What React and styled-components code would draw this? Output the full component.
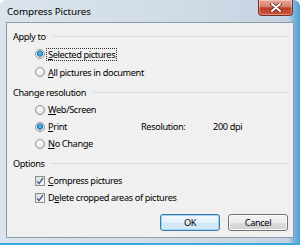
import React from "react";
import styled, { createGlobalStyle } from "styled-components";

const GlobalStyle = createGlobalStyle`
  * { box-sizing: border-box; }
  body {
    margin: 0;
    background: #ffffff;
    font-family: "Noto Sans", "Open Sans", sans-serif;
  }
`;

const Window = styled.div`
  width: 300px;
  height: 245px;
  display: flex;
  flex-direction: column;
  border-radius: 6px 6px 0 0;
  background: linear-gradient(
    to right,
    #dbe4ec 0%,
    #cfdbe6 60%,
    #c4d3e1 96%,
    #7fb2d8 98%,
    #4aa3d6 100%
  );
  border-bottom: 2px solid #3aa9dc;
  overflow: hidden;
`;

const TitleBar = styled.div`
  height: 22px;
  display: flex;
  justify-content: space-between;
  align-items: flex-start;
  padding-left: 7px;
`;

const Title = styled.span`
  padding-top: 6px;
  font-size: 9.8px;
  line-height: 12px;
  letter-spacing: -0.1px;
  color: #000;
`;

const CloseButton = styled.div`
  width: 35px;
  height: 16px;
  margin-right: 7px;
  display: flex;
  align-items: center;
  justify-content: center;
  border: 1px solid #7a3226;
  border-top: none;
  border-radius: 0 0 4px 4px;
  background: linear-gradient(#e7a597 0%, #d5806f 45%, #bf3d26 52%, #c8563c 100%);
  box-shadow: inset 0 0 0 1px rgba(255, 255, 255, 0.35);
`;

const Client = styled.div`
  flex: 1;
  margin: 0 6px 5px 6px;
  display: flex;
  flex-direction: column;
  padding: 4px 5px 0 6px;
  background: #f0f0f0;
  border: 1px solid #8d9cab;
  color: #000;
  font-size: 9.2px;
  letter-spacing: -0.36px;
`;

const Heading = styled.div`
  height: 18px;
  display: flex;
  align-items: center;
  gap: 6px;
  margin-top: ${(p) => p.$gap || 0}px;

  &::after {
    content: "";
    flex: 1;
    height: 1px;
    background: #d5dfe5;
  }
`;

const Option = styled.div`
  height: ${(p) => p.$h || 17}px;
  display: flex;
  align-items: center;
  padding-left: 22px;
`;

const Radio = styled.span`
  width: 10px;
  height: 10px;
  margin-right: 3px;
  flex-shrink: 0;
  border-radius: 50%;
  border: 1px solid #939393;
  background: ${(p) =>
    p.$on
      ? "radial-gradient(circle at 50% 45%, #6fd0f5 0%, #1c8bd0 38%, #1a5d9a 48%, #f4f4f4 56%, #dedede 100%)"
      : "radial-gradient(circle at 45% 40%, #ffffff 0%, #ececec 45%, #cfcfcf 100%)"};
`;

const Check = styled.span`
  width: 10px;
  height: 10px;
  margin-right: 3px;
  flex-shrink: 0;
  display: flex;
  align-items: center;
  justify-content: center;
  border: 1px solid #8e8f8f;
  background: linear-gradient(135deg, #dcdcdc, #fafafa);
`;

const Label = styled.span`
  line-height: 11px;
  padding: 0 1px;
  margin-left: -1px;
  outline: ${(p) => (p.$focus ? "1px dotted #333" : "none")};
  white-space: nowrap;
`;

const ResolutionRow = styled.div`
  display: grid;
  grid-template-columns: 106px 72px 1fr;
  align-items: center;
  padding-left: 22px;
  height: 17px;

  & > div {
    display: flex;
    align-items: center;
  }
`;

const ButtonRow = styled.div`
  display: flex;
  justify-content: flex-end;
  gap: 8px;
  margin-top: 8px;
`;

const Button = styled.div`
  width: 60px;
  height: 17px;
  display: flex;
  align-items: center;
  justify-content: center;
  border-radius: 3px;
  border: 1px solid ${(p) => (p.$default ? "#3d7bad" : "#707070")};
  background: ${(p) =>
    p.$default
      ? "linear-gradient(#f1f8fd 0%, #e3f1fb 50%, #cde6f7 51%, #d8ecf9 100%)"
      : "linear-gradient(#f2f2f2 0%, #ebebeb 50%, #dddddd 51%, #cfcfcf 100%)"};
  box-shadow: ${(p) =>
    p.$default ? "inset 0 0 0 1px #9fd5f3" : "inset 0 0 0 1px #fcfcfc"};
`;

const CloseGlyph = () => (
  <svg width="12" height="9" viewBox="0 0 12 9">
    <path d="M2 1 L10 8 M10 1 L2 8" stroke="#5a1a10" strokeWidth="3.4" strokeLinecap="round" />
    <path d="M2 1 L10 8 M10 1 L2 8" stroke="#ffffff" strokeWidth="2" strokeLinecap="round" />
  </svg>
);

const Tick = () => (
  <svg width="8" height="8" viewBox="0 0 8 8">
    <path d="M1 4.2 L3 6.6 L7 1" fill="none" stroke="#4a5f97" strokeWidth="1.4" />
  </svg>
);

function RadioOption({ on, focus, k, rest, h }) {
  return (
    <Option $h={h}>
      <Radio $on={on} />
      <Label $focus={focus}>
        <u>{k}</u>
        {rest}
      </Label>
    </Option>
  );
}

export default function App() {
  return (
    <>
      <GlobalStyle />
      <Window>
        <TitleBar>
          <Title>Compress Pictures</Title>
          <CloseButton>
            <CloseGlyph />
          </CloseButton>
        </TitleBar>
        <Client>
          <Heading>Apply to</Heading>
          <RadioOption on focus k="S" rest="elected pictures" h={18} />
          <RadioOption k="A" rest="ll pictures in document" h={18} />

          <Heading $gap={2}>Change resolution</Heading>
          <RadioOption k="W" rest="eb/Screen" />
          <ResolutionRow>
            <div>
              <Radio $on />
              <Label>
                <u>P</u>rint
              </Label>
            </div>
            <div>Resolution:</div>
            <div>200 dpi</div>
          </ResolutionRow>
          <RadioOption k="N" rest="o Change" />

          <Heading $gap={2}>Options</Heading>
          <Option>
            <Check>
              <Tick />
            </Check>
            <Label>
              <u>C</u>ompress pictures
            </Label>
          </Option>
          <Option>
            <Check>
              <Tick />
            </Check>
            <Label>
              D<u>e</u>lete cropped areas of pictures
            </Label>
          </Option>

          <ButtonRow>
            <Button $default>OK</Button>
            <Button>Cancel</Button>
          </ButtonRow>
        </Client>
      </Window>
    </>
  );
}
